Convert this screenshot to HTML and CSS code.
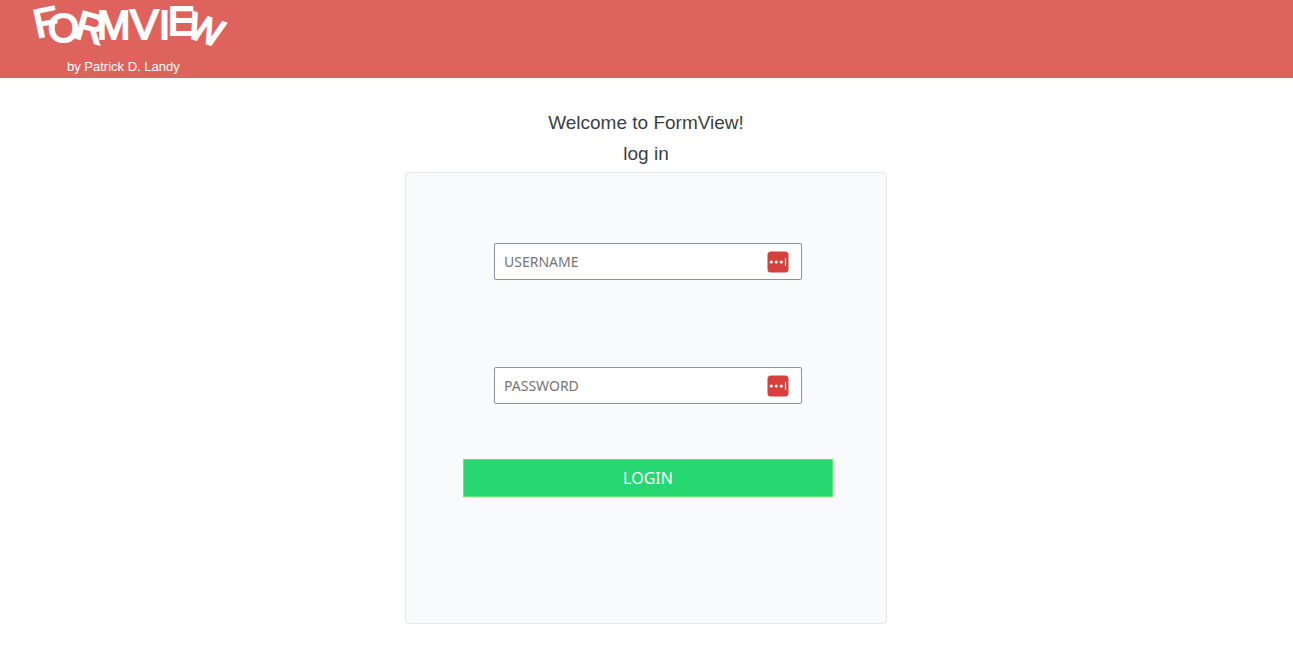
FILE: index.html
```html
<!DOCTYPE html>
<html lang="en">
<head>
<meta charset="utf-8">
<meta name="viewport" content="width=device-width, initial-scale=1">
<title>FormView</title>
<link rel="stylesheet" href="styles.css">
</head>
<body>
<header class="site-header">
  <svg class="logo" viewBox="0 0 240 78" role="img" aria-label="FormView by Patrick D. Landy">
    <g class="logo-letters">
      <text transform="translate(37 38) rotate(-12)">F</text>
      <text transform="translate(48 42)">O</text>
      <text transform="translate(73 37) rotate(16)">R</text>
      <text transform="translate(97 39)">M</text>
      <text class="logo-v" transform="translate(130 39)">V</text>
      <text transform="translate(159 39)">I</text>
      <text transform="translate(168 35)">E</text>
      <text class="logo-w" transform="translate(185 36) rotate(19)">W</text>
    </g>
    <text class="logo-byline" x="67" y="71">by Patrick D. Landy</text>
  </svg>
</header>
<main class="page">
  <h1 class="heading">Welcome to FormView!</h1>
  <h2 class="heading">log in</h2>
  <form class="card">
    <div class="field">
      <input class="field-input" type="text" placeholder="USERNAME" aria-label="Username">
      <svg class="field-icon" viewBox="0 0 22 22" aria-hidden="true"><rect class="icon-box" x="0.5" y="0.5" width="21" height="21" rx="3.5"/><circle cx="4.3" cy="11" r="1.6"/><circle cx="9.3" cy="11" r="1.6"/><circle cx="14.3" cy="11" r="1.6"/><rect x="17.9" y="7" width="1.2" height="8"/></svg>
    </div>
    <div class="field">
      <input class="field-input" type="password" placeholder="PASSWORD" aria-label="Password">
      <svg class="field-icon" viewBox="0 0 22 22" aria-hidden="true"><rect class="icon-box" x="0.5" y="0.5" width="21" height="21" rx="3.5"/><circle cx="4.3" cy="11" r="1.6"/><circle cx="9.3" cy="11" r="1.6"/><circle cx="14.3" cy="11" r="1.6"/><rect x="17.9" y="7" width="1.2" height="8"/></svg>
    </div>
    <button class="login-button" type="submit">LOGIN</button>
  </form>
</main>
</body>
</html>
```
FILE: styles.css
```css
* {
  box-sizing: border-box;
}

body {
  margin: 0;
  background: #fff;
  color: #3b3f44;
  font-family: "Liberation Sans", Arial, sans-serif;
}

.site-header {
  background: #de635c;
}

.logo {
  display: block;
  width: 240px;
  height: 78px;
  overflow: visible;
  fill: #fff;
}

.logo-letters {
  font-size: 40px;
  line-height: 1;
  stroke: #fff;
  stroke-width: 2px;
}

.logo-v {
  font-size: 43px;
}

.logo-w {
  font-size: 37px;
}

.logo-byline {
  font-size: 13px;
}

.page {
  display: flex;
  flex-direction: column;
  align-items: center;
  padding: 29px 17px 29px 16px;
}

.heading {
  margin: 0;
  font-size: 19px;
  font-weight: 400;
  line-height: 31px;
}

.card {
  display: flex;
  flex-direction: column;
  width: 100%;
  max-width: 482px;
  margin-top: 3px;
  padding: 70px 53px 126px 57px;
  border: 1px solid #e6e8ea;
  border-radius: 4px;
  background: #f8fafc;
}

.field {
  position: relative;
  margin: 0 31px 87px;
}

.field + .field {
  margin-bottom: 55px;
}

.field-input {
  display: block;
  width: 100%;
  height: 37px;
  padding: 0 40px 0 9px;
  border: 1px solid #8c90a0;
  border-radius: 2px;
  background: #fff;
  color: #3b3f44;
  font-family: "Noto Sans", sans-serif;
  font-size: 14px;
}

.field-input::placeholder {
  color: #757575;
}

.field-icon {
  position: absolute;
  top: 8px;
  right: 13px;
  width: 22px;
  height: 22px;
  fill: #fff;
}

.icon-box {
  fill: #d63f3b;
}

.login-button {
  height: 38px;
  border: 1px solid #5bea6c;
  background: #26d772;
  color: #fff;
  font-family: "Noto Sans", sans-serif;
  font-size: 16px;
}
```
